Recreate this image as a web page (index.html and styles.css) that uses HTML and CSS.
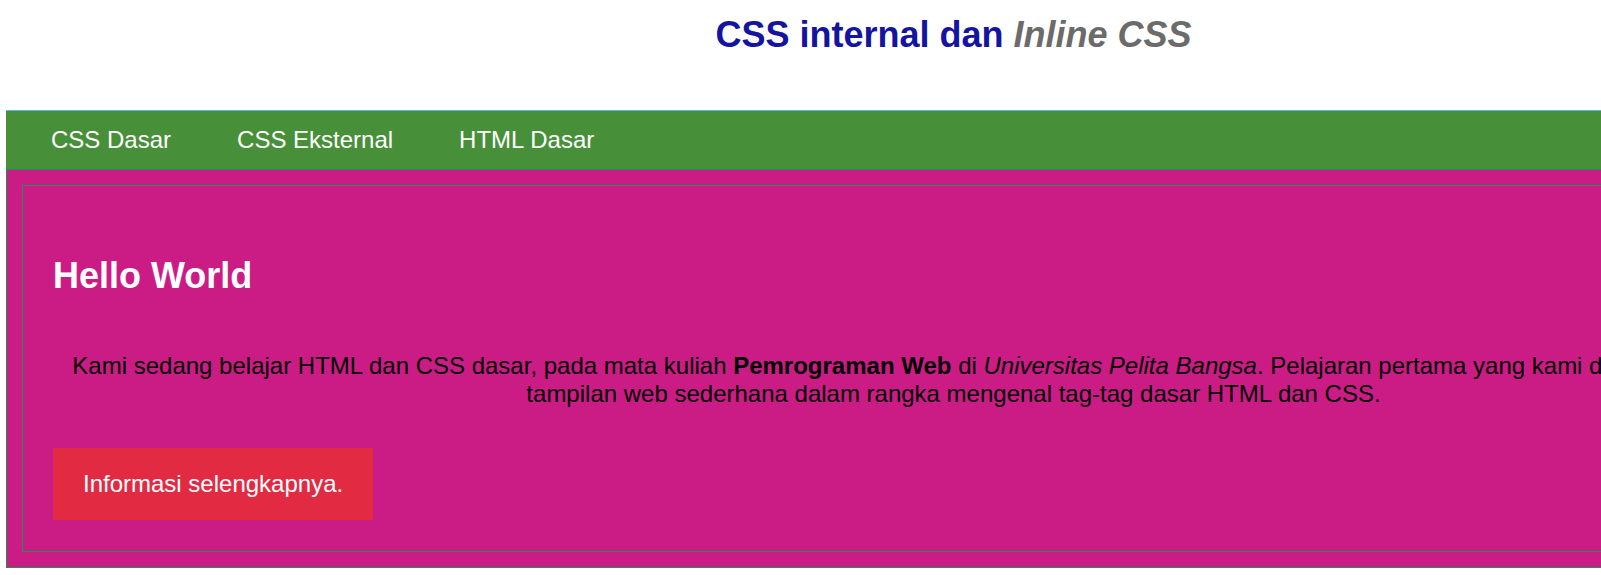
FILE: index.html
```html
<!DOCTYPE html>
<html lang="id">
<head>
<meta charset="utf-8">
<title>CSS internal dan Inline CSS</title>
<link rel="stylesheet" href="styles.css">
</head>
<body>
<div class="page">
  <header class="site-header">
    <h1 class="site-title">CSS internal dan <i class="title-alt">Inline CSS</i></h1>
  </header>
  <div class="wrapper">
    <nav class="main-nav">
      <a href="#" class="nav-link">CSS Dasar</a>
      <a href="#" class="nav-link">CSS Eksternal</a>
      <a href="#" class="nav-link">HTML Dasar</a>
    </nav>
    <section class="hero">
      <div class="hero-box">
        <h2 class="hero-title">Hello World</h2>
        <p class="hero-text">Kami sedang belajar HTML dan CSS dasar, pada mata kuliah <b>Pemrograman Web</b> di <i>Universitas Pelita Bangsa</i>. Pelajaran pertama yang kami dapat adalah membuat tampilan web sederhana dalam rangka mengenal tag-tag dasar HTML dan CSS.</p>
        <a href="#" class="hero-button">Informasi selengkapnya.</a>
      </div>
    </section>
  </div>
</div>
</body>
</html>
```
FILE: styles.css
```css
html, body {
  margin: 0;
  padding: 0;
  overflow-x: hidden;
  background: #ffffff;
}

body {
  font-family: "Liberation Sans", Arial, sans-serif;
  color: #000000;
}

.page {
  width: 1907px;
}

.site-header {
  padding: 14px 0 55px;
  text-align: center;
}

.site-title {
  margin: 0;
  font-size: 36px;
  line-height: 41px;
  font-weight: bold;
  color: #1414a0;
}

.title-alt {
  color: #6b6b6b;
  font-style: italic;
}

.wrapper {
  margin: 0 6px;
  border-top: 1px solid #5ab9e0;
}

.main-nav {
  display: flex;
  background: #488f3a;
  padding: 0 0 0 12px;
}

.nav-link {
  display: block;
  padding: 15px 33px;
  font-size: 24px;
  line-height: 28px;
  color: #ffffff;
  text-decoration: none;
}

.hero {
  background: #cb1c86;
  border: 1px solid #1d9150;
  padding: 15px;
}

.hero-box {
  border: 1px solid #1d9150;
  padding: 30px 30px 31px;
}

.hero-title {
  margin: 39px 0 56px;
  font-size: 36px;
  line-height: 41px;
  font-weight: bold;
  color: #ffffff;
}

.hero-text {
  margin: 0 0 40px;
  font-size: 24px;
  line-height: 28px;
  text-align: center;
  color: #000000;
}

.hero-button {
  display: inline-block;
  padding: 22px 30px;
  font-size: 24px;
  line-height: 28px;
  background: #e22a42;
  color: #ffffff;
  text-decoration: none;
}
```
